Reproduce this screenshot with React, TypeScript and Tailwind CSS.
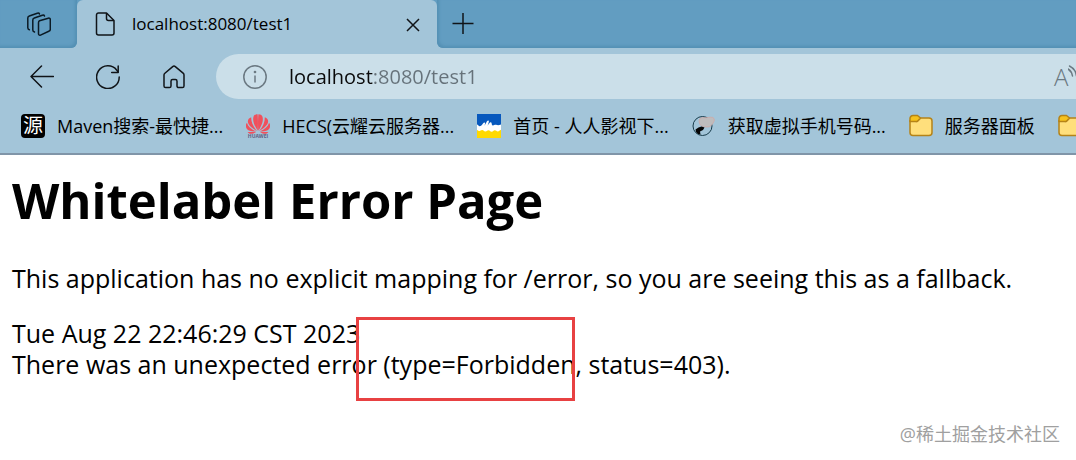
import React from 'react';

type Bookmark = {
  label: string;
  icon: React.ReactNode;
};

const MavenIcon = () => (
  <span className="flex size-6 shrink-0 items-center justify-center rounded-sm bg-black text-xl leading-none text-white">源</span>
);

const HuaweiIcon = () => (
  <svg viewBox="0 0 24 24" className="size-6 shrink-0" aria-hidden="true">
    <g fill="#f0505c">
      <path d="M11.700 16.800C8.300 11.500 6.200 6.500 7.600 2.400 8.300.8 10 .1 11.600.2c.4 4 .5 10.500.1 16.600z" />
      <path d="M12.300 16.800c3.400-5.300 5.500-10.300 4.100-14.400C15.700.8 14 .1 12.400.2c-.4 4-.5 10.500-.1 16.600z" />
      <path d="M10.900 16.900C7 12.500 5 8 5.200 3.200 3 4 1.600 5.600 1.900 7.900c.5 3.200 4.500 6.600 9 9z" />
      <path d="M13.100 16.900C17 12.500 19 8 18.800 3.200c2.200.8 3.600 2.400 3.300 4.700-.5 3.200-4.500 6.600-9 9z" />
      <path d="M10.200 17.500C5.400 15.400 2 12.600.9 8.700-.4 10.400-.5 12.600.6 14.500c1.600 2.500 5 3.200 9.600 3z" />
      <path d="M13.800 17.500c4.800-2.100 8.200-4.900 9.300-8.800 1.300 1.700 1.400 3.900.3 5.800-1.600 2.500-5 3.200-9.600 3z" />
      <path d="M10 17.900H1.600c1.700 2.500 4.700 2.700 8.400 0zM14 17.900h8.400c-1.700 2.500-4.700 2.700-8.400 0z" />
    </g>
    <text x="12" y="24" textAnchor="middle" fontSize="5" fontWeight="700" fill="#5d6284">HUAWEI</text>
  </svg>
);

const WaveIcon = () => (
  <svg viewBox="0 0 24 24" className="size-6 shrink-0" aria-hidden="true">
    <path fill="#0758bd" d="M0 0h24v14H0z" />
    <path fill="#ffd900" d="M0 14h24v10H0z" />
    <path
      fill="#fff"
      d="M0 10.500c1 0 1.400 1.700 2.800 1.700 2 0 2.700-2.700 4.200-3.700 1-.5 1.400.6.900 1.800l-.5 1.400c1.500-1.400 2-4.700 3.600-5.200 1.200-.2 1 1.200.5 2.400l-1 2.800c1.200-1.200 2-3.400 3.400-3.400 1.200.2.4 2.200 1.400 3 1.200.7 2.200-.8 3.700-.5 1.500.4 2.500.7 5-.3v5.300c-1.600.3-1.800 1.700-3.200 1.700s-1.500-1.200-3-1.200-1.500 1.400-3.200 1.400-1.500-1.400-3-1.400-1.500 1.200-3.200 1.200-1.600-1.400-3.200-1.400-1.600 1-2.700 1C1.400 17.100.8 16 0 16z"
    />
  </svg>
);

const PhoneIcon = () => (
  <svg viewBox="0 0 24 24" className="size-6 shrink-0" aria-hidden="true">
    <circle cx="10.500" cy="12" r="9.500" fill="none" stroke="#173b4a" strokeWidth="1" />
    <path d="M8 4.500c2-1.500 4-.5 6-.8 3-.4 7-1.200 8 .8s-.5 4-2 6-2.500 2.500-5 2.500-5-.5-6.500-2-2-4.500-.5-6.500z" fill="#bebcbd" stroke="#d3a5a1" strokeWidth=".7" />
    <path d="M3.500 15.500l3-2 3-1 3 1-1.500 2.500-3 1.500.5 3-2.500-.5-2-2z" fill="#050505" />
  </svg>
);

const FolderIcon = () => (
  <svg viewBox="0 0 24 24" className="size-6 shrink-0" aria-hidden="true">
    <path d="M1 6.500V18.500a3 3 0 0 0 3 3h16a3 3 0 0 0 3-3V7a3 3 0 0 0-3-3h-8.500L8 7.500z" fill="#ffdf7c" stroke="#b58318" strokeWidth="1.500" strokeLinejoin="round" />
    <path d="M1 7.500V4.500a3 3 0 0 1 3-3h4.500L11.500 4 9 6.800a2 2 0 0 1-1.500.7z" fill="#f6c21c" stroke="#b58318" strokeWidth="1.500" strokeLinejoin="round" />
  </svg>
);

const bookmarks: Bookmark[] = [
  { label: 'Maven搜索-最快捷...', icon: <MavenIcon /> },
  { label: 'HECS(云耀云服务器...', icon: <HuaweiIcon /> },
  { label: '首页 - 人人影视下...', icon: <WaveIcon /> },
  { label: '获取虚拟手机号码...', icon: <PhoneIcon /> },
  { label: '服务器面板', icon: <FolderIcon /> },
];

const TabStrip: React.FC = () => (
  <div className="flex h-12">
    <div className="flex w-[77px] shrink-0 items-center rounded-br-md bg-[#629dc1] pl-[27px] shadow-[inset_-2px_-2px_3px_#5490b4]">
      <button type="button" aria-label="Tab actions">
        <svg viewBox="0 0 24 24" className="size-6" fill="none" stroke="#0b1a24" strokeWidth="1.500" strokeLinecap="round" strokeLinejoin="round">
          <path d="M12.500 8.700l8.800-2.500c1.200-.3 2 .3 2 1.500v9.600c0 1-.5 1.700-1.500 2l-8.300 3.800c-1.200.4-2-.2-2-1.400V10.700c0-1 .2-1.700 1-2z" />
          <path d="M7.500 20c-1-.3-1.700-.9-1.700-2V8c0-1 .5-1.700 1.500-2l8-2.800c1-.3 1.900 0 2.200.8" />
          <path d="M2.300 17.700C1.300 17.400.8 16.800.8 15.800V6c0-1 .5-1.700 1.500-2l8-2.800c1-.3 1.900 0 2.200.8" />
        </svg>
      </button>
    </div>

    <div className="w-[360px] bg-[#629dc1]">
      <div className="flex h-full items-center rounded-t-md bg-[#a3c5d9] pl-4 pr-3">
        <svg viewBox="0 0 24 24" className="size-6 shrink-0" fill="none" stroke="#101418" strokeWidth="1.500" strokeLinejoin="round" aria-hidden="true">
          <path d="M5.500 1h8L21 8.500V21a2 2 0 0 1-2 2H5.500a2 2 0 0 1-2-2V3a2 2 0 0 1 2-2z" />
          <path d="M13.500 1v5.500a2 2 0 0 0 2 2H21" />
        </svg>
        <span className="ml-[15px] flex-1 text-[17px]">localhost:8080/test1</span>
        <button type="button" aria-label="Close tab">
          <svg viewBox="0 0 24 24" className="size-6" fill="none" stroke="#101418" strokeWidth="1.500">
            <path d="M6 7l12 12M18 7L6 19" />
          </svg>
        </button>
      </div>
    </div>

    <div className="flex flex-1 items-center rounded-bl-md bg-[#629dc1] pl-[14px] shadow-[inset_2px_-2px_3px_#5490b4]">
      <button type="button" aria-label="New tab">
        <svg viewBox="0 0 24 24" className="size-6" fill="none" stroke="#101418" strokeWidth="1.500">
          <path d="M12 1v21M1.500 11.500h21" />
        </svg>
      </button>
    </div>
  </div>
);

const Toolbar: React.FC = () => (
  <div className="flex items-center pl-[30px] pt-1.5">
    <div className="flex gap-[42px]">
      <button type="button" aria-label="Back">
        <svg viewBox="0 0 24 24" className="size-6" fill="none" stroke="#101418" strokeWidth="1.500" strokeLinecap="round" strokeLinejoin="round">
          <path d="M23.500 11.500H1M11.500 1L1 11.500 11.500 22" />
        </svg>
      </button>
      <button type="button" aria-label="Refresh">
        <svg viewBox="0 0 24 24" className="size-6" fill="none" stroke="#101418" strokeWidth="1.500" strokeLinecap="round" strokeLinejoin="round">
          <path d="M23.200 12A11.300 11.300 0 1 1 20.800 5.200L22 7" />
          <path d="M22.200 1v6.500h-6.500" />
        </svg>
      </button>
      <button type="button" aria-label="Home">
        <svg viewBox="0 0 24 24" className="size-6" fill="none" stroke="#101418" strokeWidth="1.500" strokeLinejoin="round">
          <path d="M10.700 1.600L2.900 8.200a2.500 2.500 0 0 0-.9 1.900V21a1.600 1.600 0 0 0 1.600 1.600h3.800A1.600 1.600 0 0 0 9 21v-4.800a1.600 1.600 0 0 1 1.600-1.600h2.800a1.600 1.600 0 0 1 1.600 1.600V21a1.600 1.600 0 0 0 1.600 1.600h3.800A1.600 1.600 0 0 0 22 21V10.100a2.500 2.500 0 0 0-.9-1.900l-7.800-6.600a2 2 0 0 0-2.600 0z" />
        </svg>
      </button>
    </div>

    <div className="ml-[30px] flex h-[45px] flex-1 items-center overflow-hidden rounded-l-full bg-[#cbdfe9] pl-[27px]">
      <svg viewBox="0 0 24 24" className="size-6 shrink-0" fill="none" stroke="#6b7982" strokeWidth="1.500" aria-hidden="true">
        <circle cx="12" cy="12" r="11.200" />
        <path d="M12 10.500v7" />
        <circle cx="12" cy="7" r=".6" fill="#6b7982" />
      </svg>
      {/* host in black, port and path in grey */}
      <input
        type="text"
        aria-label="Address"
        defaultValue="localhost:8080/test1"
        className="ml-[22px] min-w-0 flex-1 bg-[linear-gradient(90deg,#0a0a0a_84px,#66727a_84px)] bg-clip-text text-xl text-transparent caret-black outline-none"
      />
      <button type="button" aria-label="Read aloud" className="flex w-[22px] shrink-0 items-center text-2xl font-light text-[#6b7982]">
        <span>A</span>
        <svg viewBox="0 0 10 24" className="h-6 w-2.5 shrink-0" fill="none" stroke="#6b7982" strokeWidth="1.500" strokeLinecap="round">
          <path d="M0 4c2.500 1.500 4 4 4.500 7M1.500 1C5.500 3 8 6.500 8.500 11" />
        </svg>
      </button>
    </div>
  </div>
);

const BookmarksBar: React.FC = () => (
  <nav aria-label="Bookmarks" className="flex h-14 items-center gap-[23px] overflow-hidden border-b-2 border-[#8095a8] pl-[21px]">
    {bookmarks.map((item) => (
      <a key={item.label} href="#" className="flex shrink-0 items-center gap-3 whitespace-nowrap text-lg">
        {item.icon}
        <span>{item.label}</span>
      </a>
    ))}
    <a href="#" aria-label="More bookmarks" className="shrink-0">
      <FolderIcon />
    </a>
  </nav>
);

const App: React.FC = () => {
  return (
    <div className="flex min-h-screen flex-col overflow-hidden bg-white font-['Open_Sans','Noto_Sans_CJK_SC',sans-serif] text-black">
      <header className="bg-[#a3c5d9]">
        <TabStrip />
        <Toolbar />
        <BookmarksBar />
      </header>

      <main className="px-3 pt-[15px]">
        <h1 className="text-[49px] font-bold leading-[60px]">Whitelabel Error Page</h1>
        <p className="mt-[33px] text-[25px] leading-[31px]">
          This application has no explicit mapping for /error, so you are seeing this as a fallback.
        </p>
        <div className="relative mt-6 text-[25px] leading-[31px]">
          <div>Tue Aug 22 22:46:29 CST 2023</div>
          <div>There was an unexpected error (type=Forbidden, status=403).</div>
          <div className="absolute -top-px left-[344px] h-[84px] w-[219px] border-3 border-[#e84142]" />
        </div>
      </main>

      <footer className="mt-auto px-4 pb-3 text-right text-lg text-[#a0a0a0]">@稀土掘金技术社区</footer>
    </div>
  );
};

export default App;
